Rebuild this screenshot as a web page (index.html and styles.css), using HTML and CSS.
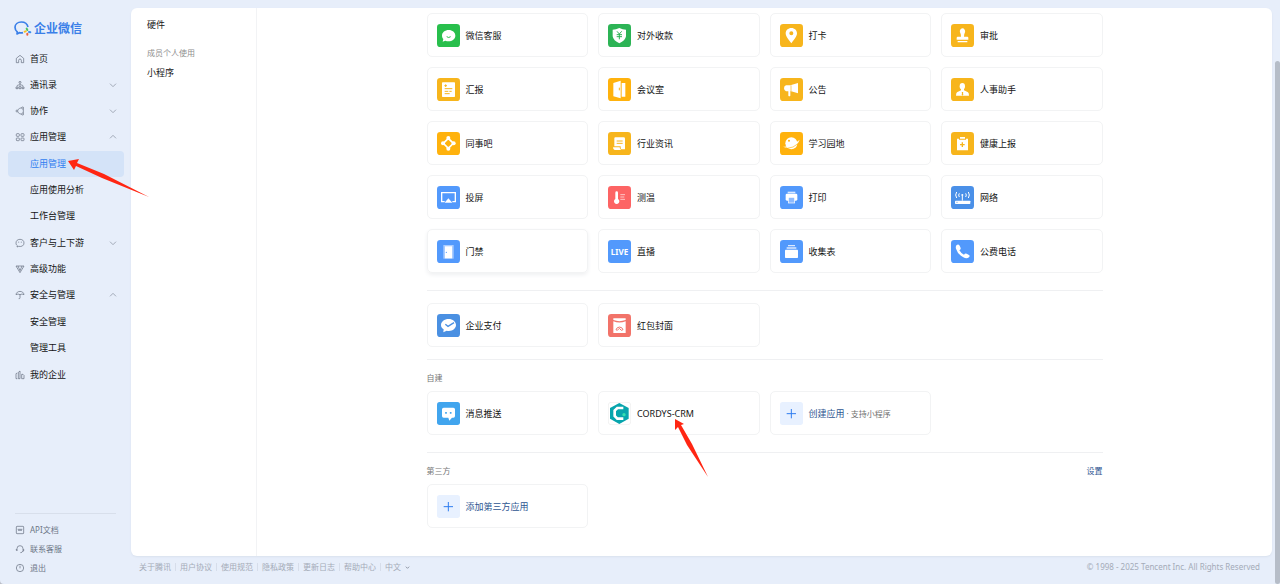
FILE: index.html
```html
<!DOCTYPE html>
<html lang="zh-CN">
<head>
<meta charset="utf-8">
<meta name="viewport" content="width=device-width, initial-scale=1">
<title>企业微信 - 应用管理</title>
<link rel="stylesheet" href="styles.css">
</head>
<body>
<div class="app">
  <aside class="sidebar">
    <a class="logo" href="#">
      <svg class="logo-mark" viewBox="0 0 54 45" fill="none">
        <path d="M42 18C40 9 32 3 22 3C11 3 3 10 3 19C3 25 6 30 10 33L9 39L16 35C20 36 23 36 27 35" stroke="#3a7fe8" stroke-width="5" stroke-linejoin="round"/>
        <path d="M38 23l2 4" stroke="#4fc265" stroke-width="6" stroke-linecap="round"/>
        <path d="M45 33l4 1" stroke="#3a8df0" stroke-width="6" stroke-linecap="round"/>
        <path d="M40 38l0 3" stroke="#f0603c" stroke-width="6" stroke-linecap="round"/>
        <path d="M32 32l3-1" stroke="#f9c21d" stroke-width="6" stroke-linecap="round"/>
      </svg>
      <span>企业微信</span>
    </a>
    <nav class="nav">
      <a class="nav-item" href="#"><svg class="ico" viewBox="0 0 30 30"><path d="M4 13L15 4L26 13V26H19V19A4 4 0 0 0 11 19V26H4Z"/></svg><span>首页</span></a>
      <button class="nav-item" type="button"><svg class="ico" viewBox="0 0 30 30"><circle cx="15" cy="7" r="3"/><path d="M15 10V15M6 19Q6 15 10 15H20Q24 15 24 19M3 26V21H9V26ZM12 26V20H18V26ZM21 26V21H27V26Z"/></svg><span>通讯录</span><svg class="chev" viewBox="0 0 24 24"><path d="M3 8l9 9 9-9"/></svg></button>
      <button class="nav-item" type="button"><svg class="ico" viewBox="0 0 30 30"><path d="M8 12Q13 6 20 5M8 18Q13 24 20 25M25 9V21"/><circle cx="6" cy="15" r="3"/><circle cx="23" cy="6" r="3"/><circle cx="23" cy="24" r="3"/></svg><span>协作</span><svg class="chev" viewBox="0 0 24 24"><path d="M3 8l9 9 9-9"/></svg></button>
      <button class="nav-item" type="button"><svg class="ico" viewBox="0 0 30 30"><rect x="4" y="5" width="9" height="8" rx="2"/><rect x="18" y="5" width="9" height="8" rx="2"/><rect x="4" y="18" width="9" height="8" rx="2"/><rect x="18" y="18" width="9" height="8" rx="2"/></svg><span>应用管理</span><svg class="chev" viewBox="0 0 24 24"><path d="M3 16l9-9 9 9"/></svg></button>
      <div class="subnav">
        <a class="nav-item sub active" href="#">应用管理</a>
        <a class="nav-item sub" href="#">应用使用分析</a>
        <a class="nav-item sub" href="#">工作台管理</a>
      </div>
      <button class="nav-item" type="button"><svg class="ico" viewBox="0 0 30 30"><path d="M15 4C8 4 3 8 3 15C3 18 4 21 7 23L6 27L11 25C20 27 27 23 27 15C27 8 22 4 15 4ZM11 11V14M19 11V14"/></svg><span>客户与上下游</span><svg class="chev" viewBox="0 0 24 24"><path d="M3 8l9 9 9-9"/></svg></button>
      <a class="nav-item" href="#"><svg class="ico" viewBox="0 0 30 30"><path d="M3 6H27L15 26ZM9 6L15 20L21 6"/></svg><span>高级功能</span></a>
      <button class="nav-item" type="button"><svg class="ico" viewBox="0 0 30 30"><path d="M3 14C4 1 26 1 27 14L21 12L15 14L9 12ZM15 14V23Q15 27 11 26"/></svg><span>安全与管理</span><svg class="chev" viewBox="0 0 24 24"><path d="M3 16l9-9 9 9"/></svg></button>
      <div class="subnav">
        <a class="nav-item sub" href="#">安全管理</a>
        <a class="nav-item sub" href="#">管理工具</a>
      </div>
      <a class="nav-item" href="#"><svg class="ico" viewBox="0 0 30 30"><path d="M7 26H3V11L7 9M10 26V7L15 3V26ZM20 26V13H24L27 16V26Z"/></svg><span>我的企业</span></a>
    </nav>
    <div class="side-foot">
      <a href="#"><svg class="ico" viewBox="0 0 30 30"><rect x="4" y="4" width="22" height="22" rx="2"/><path d="M8 13H22M9 16H21"/></svg><span>API文档</span></a>
      <a href="#"><svg class="ico" viewBox="0 0 30 30"><path d="M6 20V14A9 9 0 0 1 24 14V20M4 15V19H7M26 15V21H23M24 21Q22 26 16 26"/></svg><span>联系客服</span></a>
      <a href="#"><svg class="ico" viewBox="0 0 30 30"><circle cx="15" cy="15" r="11"/><path d="M15 8V16"/></svg><span>退出</span></a>
    </div>
  </aside>

  <div class="page">
    <div class="panel">
      <nav class="categories">
        <a href="#">硬件</a>
        <p>成员个人使用</p>
        <a href="#">小程序</a>
      </nav>
      <main class="content">
        <section class="cards">
          <a class="card" href="#"><svg class="tile" viewBox="0 0 69 69"><rect width="69" height="69" rx="10" fill="#28bf4c"/><path fill="#fff" d="M35 18C24 18 15 25 15 35C15 39 17 43 19 45L17 53L25 50C39 55 55 48 55 35C55 25 46 18 35 18Z"/><path d="M29 38Q35 43 41 38" fill="none" stroke="#28bf4c" stroke-width="3"/></svg><span>微信客服</span></a>
          <a class="card" href="#"><svg class="tile" viewBox="0 0 69 69"><rect width="69" height="69" rx="10" fill="#2cb455"/><path fill="#fff" d="M34 12Q44 17 54 17V37Q52 50 34 58Q16 50 14 37V17Q24 17 34 12Z"/><path d="M27 22L34 30L41 22M34 30V46M26 32H42M26 38H42" fill="none" stroke="#2cb455" stroke-width="3"/></svg><span>对外收款</span></a>
          <a class="card" href="#"><svg class="tile" viewBox="0 0 69 69"><rect width="69" height="69" rx="10" fill="#f7b51c"/><path fill="#fff" fill-rule="evenodd" d="M34 12C24 12 17 19 17 28C17 38 27 48 34 58C41 48 51 38 51 28C51 19 44 12 34 12ZM34 22A6 6 0 1 1 34 34A6 6 0 1 1 34 22Z"/></svg><span>打卡</span></a>
          <a class="card" href="#"><svg class="tile" viewBox="0 0 69 69"><rect width="69" height="69" rx="10" fill="#f7b51c"/><path fill="#fff" d="M34 13A9 9 0 0 1 42 25Q39 30 39 38H49Q52 38 52 42V47H17V42Q17 38 20 38H30Q30 30 27 25A9 9 0 0 1 34 13ZM20 51H49V55H20Z"/></svg><span>审批</span></a>
          <a class="card" href="#"><svg class="tile" viewBox="0 0 69 69"><rect width="69" height="69" rx="10" fill="#f7b51c"/><rect x="15" y="13" width="39" height="44" rx="2" fill="#fff"/><path d="M22 23H30M26 19V27M23 32H46M23 40H34M37 40H44M23 47H38" stroke="#f7b51c" stroke-width="3"/></svg><span>汇报</span></a>
          <a class="card" href="#"><svg class="tile" viewBox="0 0 69 69"><rect width="69" height="69" rx="10" fill="#ffb20d"/><path fill="#fff" d="M16 15L38 8V61L16 55ZM41 15H52V56H41Z"/><path d="M34 29V37" stroke="#ffb20d" stroke-width="3"/></svg><span>会议室</span></a>
          <a class="card" href="#"><svg class="tile" viewBox="0 0 69 69"><rect width="69" height="69" rx="10" fill="#f7b51c"/><path fill="#fff" d="M31 22L54 15V46L31 39V53Q28 56 25 53V40H18Q12 37 12 31Q12 24 18 22Z"/><path d="M33 22V39" stroke="#f7b51c" stroke-width="2"/></svg><span>公告</span></a>
          <a class="card" href="#"><svg class="tile" viewBox="0 0 69 69"><rect width="69" height="69" rx="10" fill="#f7b51c"/><ellipse cx="34" cy="25" rx="8" ry="10" fill="#fff"/><path fill="#fff" d="M30 31H39V37L51 43Q54 46 54 53H15Q15 46 18 43L30 37Z"/><path d="M32 42H37L36 45L37 50L34 53L32 50L33 45Z" fill="#f7b51c"/></svg><span>人事助手</span></a>
          <a class="card" href="#"><svg class="tile" viewBox="0 0 69 69"><rect width="69" height="69" rx="10" fill="#ffb20d"/><path d="M34 19L49 34L34 49L19 34Z" fill="none" stroke="#fff" stroke-width="5"/><g fill="#fff"><circle cx="34" cy="18" r="6"/><circle cx="50" cy="34" r="6"/><circle cx="34" cy="50" r="6"/><circle cx="18" cy="34" r="6"/></g></svg><span>同事吧</span></a>
          <a class="card" href="#"><svg class="tile" viewBox="0 0 69 69"><rect width="69" height="69" rx="10" fill="#f7b51c"/><path fill="#fff" d="M22 16H47Q51 16 51 20V52H41Q38 52 38 49V43H19V19Q19 16 22 16ZM15 46H35Q35 52 40 54H20Q15 52 15 46Z"/><path d="M26 27H44M26 34H44" stroke="#f7b51c" stroke-width="3"/></svg><span>行业资讯</span></a>
          <a class="card" href="#"><svg class="tile" viewBox="0 0 69 69"><rect width="69" height="69" rx="10" fill="#ffb20d"/><circle cx="34" cy="34" r="18" fill="#fff"/><path d="M9 44Q32 46 59 23Q56 34 46 40Q28 51 9 44Z" fill="#fff"/><path d="M22 49Q40 48 54 35" fill="none" stroke="#ffb20d" stroke-width="2"/><circle cx="27" cy="26" r="3" fill="#ffb20d"/></svg><span>学习园地</span></a>
          <a class="card" href="#"><svg class="tile" viewBox="0 0 69 69"><rect width="69" height="69" rx="10" fill="#f7b51c"/><path fill="#fff" d="M18 20H24V23H45V20H51V55H18ZM27 15H42V20H27Z"/><path d="M34 31V45M27 38H41" stroke="#f7b51c" stroke-width="4"/></svg><span>健康上报</span></a>
          <a class="card" href="#"><svg class="tile" viewBox="0 0 69 69"><rect width="69" height="69" rx="10" fill="#5299fc"/><path d="M23 47H14V20H55V47H46" fill="none" stroke="#fff" stroke-width="4"/><path d="M34 37L46 50H23Z" fill="#fff"/></svg><span>投屏</span></a>
          <a class="card" href="#"><svg class="tile" viewBox="0 0 69 69"><rect width="69" height="69" rx="10" fill="#fd6464"/><path fill="#fff" d="M22 20A4 4 0 0 1 30 20V39A8 8 0 1 1 22 39Z"/><path d="M37 26H51M37 33H49M37 40H51" stroke="#ffc5c5" stroke-width="3"/></svg><span>测温</span></a>
          <a class="card" href="#"><svg class="tile" viewBox="0 0 69 69"><rect width="69" height="69" rx="10" fill="#5299fc"/><rect x="23" y="17" width="23" height="5" fill="#dbe9ff"/><rect x="17" y="23" width="35" height="21" rx="4" fill="#fff"/><rect x="25" y="34" width="19" height="17" fill="#8dbbff" stroke="#fff" stroke-width="2"/></svg><span>打印</span></a>
          <a class="card" href="#"><svg class="tile" viewBox="0 0 69 69"><rect width="69" height="69" rx="10" fill="#4a90e8"/><rect x="12" y="44" width="46" height="10" rx="2" fill="#fff"/><path d="M16 49H20" stroke="#4a90e8" stroke-width="2"/><path d="M34 30V44M17 18Q11 27 17 36M25 22Q21 27 25 33M44 22Q48 27 44 33M52 18Q58 27 52 36" fill="none" stroke="#fff" stroke-width="3"/><circle cx="34" cy="27" r="3" fill="#fff"/></svg><span>网络</span></a>
          <a class="card raised" href="#"><svg class="tile" viewBox="0 0 69 69"><rect width="69" height="69" rx="10" fill="#5299fc"/><rect x="19" y="15" width="31" height="41" fill="#a9ccff"/><rect x="24" y="19" width="21" height="36" fill="#fff"/><circle cx="28" cy="37" r="2" fill="#5299fc"/></svg><span>门禁</span></a>
          <a class="card" href="#"><b class="tile live">LIVE</b><span>直播</span></a>
          <a class="card" href="#"><svg class="tile" viewBox="0 0 69 69"><rect width="69" height="69" rx="10" fill="#5299fc"/><path d="M24 17H45M20 24H49" stroke="#dbe9ff" stroke-width="4"/><rect x="15" y="29" width="39" height="25" rx="2" fill="#fff"/></svg><span>收集表</span></a>
          <a class="card" href="#"><svg class="tile" viewBox="0 0 69 69"><rect width="69" height="69" rx="10" fill="#5299fc"/><path fill="#fff" d="M17 15Q22 11 26 17L29 24Q30 28 25 31Q30 40 39 44Q42 39 47 41L54 45Q58 48 54 52Q47 58 37 52Q20 43 15 26Q13 19 17 15Z"/></svg><span>公费电话</span></a>
        </section>

        <section class="group">
          <div class="cards">
            <a class="card" href="#"><svg class="tile" viewBox="0 0 69 69"><rect width="69" height="69" rx="10" fill="#4a90e2"/><path fill="#fff" d="M35 15C22 15 12 23 12 33C12 39 15 43 20 46L19 55L29 50C44 54 57 44 57 33C57 23 47 15 35 15Z"/><path d="M25 31L33 37L51 26" fill="none" stroke="#4a90e2" stroke-width="4"/></svg><span>企业支付</span></a>
            <a class="card" href="#"><svg class="tile" viewBox="0 0 69 69"><rect width="69" height="69" rx="10" fill="#f27369"/><path fill="#fff" d="M16 13H53V18Q34 25 16 18ZM16 22Q34 29 53 22V57H16Z"/><path d="M24 47A11 11 0 0 1 45 47L40 49L34 43L28 49Z" fill="none" stroke="#f27369" stroke-width="3"/></svg><span>红包封面</span></a>
          </div>
        </section>

        <section class="group ruled">
          <header><h2>自建</h2></header>
          <div class="cards">
            <a class="card" href="#"><svg class="tile" viewBox="0 0 69 69"><rect width="69" height="69" rx="8" fill="#41a5ee"/><path fill="#fff" d="M20 17H49Q54 17 54 22V42Q54 47 49 47H45L37 56L34 47H20Q15 47 15 42V22Q15 17 20 17Z"/><path d="M27 30V35M41 30V35" stroke="#41a5ee" stroke-width="5"/></svg><span>消息推送</span></a>
            <a class="card" href="#"><svg class="tile" viewBox="0 0 69 69"><rect x="1" y="1" width="67" height="67" rx="8" fill="#fff" stroke="#ececec" stroke-width="2"/><path d="M34 3L62 18V50L34 66L6 50V18Z" fill="#07a5ad"/><path d="M46 18H28L20 26V42L28 50H46" fill="none" stroke="#fff" stroke-width="8"/><circle cx="48" cy="38" r="5" fill="#34e0b1"/></svg><span>CORDYS-CRM</span></a>
            <a class="card add" href="#"><svg class="tile" viewBox="0 0 69 69"><rect width="69" height="69" rx="8" fill="#e8f1ff"/><path d="M34 21V49M20 35H48" stroke="#2f7df0" stroke-width="3"/></svg><span>创建应用<small> · 支持小程序</small></span></a>
          </div>
        </section>

        <section class="group">
          <header><h2>第三方</h2><a href="#">设置</a></header>
          <div class="cards">
            <a class="card add" href="#"><svg class="tile" viewBox="0 0 69 69"><rect width="69" height="69" rx="8" fill="#e8f1ff"/><path d="M34 21V49M20 35H48" stroke="#2f7df0" stroke-width="3"/></svg><span>添加第三方应用</span></a>
          </div>
        </section>
      </main>
    </div>
    <footer class="footer">
      <div class="links">
        <a href="#">关于腾讯</a><a href="#">用户协议</a><a href="#">使用规范</a><a href="#">隐私政策</a><a href="#">更新日志</a><a href="#">帮助中心</a>
        <button type="button">中文 <svg viewBox="0 0 12 12"><path d="M2 4l4 4 4-4"/></svg></button>
      </div>
      <span>© 1998 - 2025 Tencent Inc. All Rights Reserved</span>
    </footer>
  </div>

  <div class="scroll-thumb"></div>
  <svg class="arrow arrow-nav" viewBox="0 0 82 39"><path fill="#ff2613" d="M0 2L11 0L9 4L36 15L81 38L34 19L8 7L6 11Z"/></svg>
  <svg class="arrow arrow-app" viewBox="0 0 34 59"><path fill="#ff2613" d="M0 0L9 5L6 6L17 25L33 58L12 26L3 8L0 11Z"/></svg>
</div>
</body>
</html>
```

FILE: styles.css
```css
* { box-sizing: border-box; }

body {
  margin: 0;
  background: #b9bdc6;
  color: #141414;
  font: 9px/12px "Noto Sans", "Noto Sans CJK SC", sans-serif;
}

a { color: inherit; text-decoration: none; }

button {
  border: 0;
  padding: 0;
  background: none;
  color: inherit;
  font: inherit;
  cursor: pointer;
}

.app {
  position: relative;
  display: grid;
  grid-template-columns: 131px minmax(0, 1fr);
  min-height: 100vh;
  background: #e7eefa;
  border-bottom-left-radius: 4px;
}

/* Sidebar */
.sidebar {
  display: flex;
  flex-direction: column;
  padding: 18px 7px 7px 8px;
}

.logo {
  display: flex;
  align-items: center;
  gap: 2px;
  padding-left: 6px;
  height: 20px;
  color: #3a7fe8;
  font-size: 12px;
  font-weight: 700;
}

.logo span { padding-top: 2px; }
.logo-mark { width: 18px; height: 15px; }

.nav {
  display: flex;
  flex-direction: column;
  margin-top: 8px;
}

.nav-item {
  display: flex;
  align-items: center;
  gap: 5px;
  width: 100%;
  height: 26px;
  padding: 0 7px;
  border-radius: 4px;
  text-align: left;
}

.subnav { margin: 1px 0; }
.sub { padding-left: 22px; }
.active { background: #d4e3f8; color: #2f7df0; }

.ico {
  width: 10px;
  height: 10px;
  fill: none;
  stroke: #5f6878;
  stroke-width: 2;
}

.chev {
  width: 8px;
  height: 8px;
  margin-left: auto;
  fill: none;
  stroke: #7f8795;
  stroke-width: 2;
}

.side-foot {
  display: flex;
  flex-direction: column;
  margin: auto 8px 0 7px;
  padding-top: 6px;
  border-top: 1px solid #d8dfeb;
  color: #6d7686;
  font-size: 8px;
}

.side-foot a {
  display: flex;
  align-items: center;
  gap: 5px;
  height: 19px;
}

/* Main panel */
.page {
  display: flex;
  flex-direction: column;
  padding: 8px 8px 0 0;
}

.panel {
  display: flex;
  flex: 1;
  background: #fff;
  border-radius: 6px;
  box-shadow: 0 1px 2px #d9e1ee;
}

.categories {
  display: flex;
  flex: 0 0 126px;
  flex-direction: column;
  padding: 11px 16px;
  border-right: 1px solid #f2f3f5;
}

.categories p {
  margin: 16px 0 8px;
  color: #8d8d8d;
  font-size: 8px;
}

.content {
  flex: 0 1 676px;
  margin: 0 auto;
  padding: 5px 0 28px;
}

.cards {
  display: grid;
  grid-template-columns: repeat(4, minmax(0, 1fr));
  gap: 10px;
}

.card {
  display: flex;
  align-items: center;
  gap: 6px;
  height: 44px;
  padding: 0 9px;
  border: 1px solid #f2f3f4;
  border-radius: 5px;
}

.card span { padding-top: 2px; }
.raised { box-shadow: 0 2px 4px #eff0f2; }
.add { color: #2d5591; }
.card small { color: #717171; font-size: 8px; }

.tile {
  flex: none;
  width: 23px;
  height: 23px;
}

.live {
  border-radius: 3px;
  background: #5299fc;
  color: #fff;
  font-size: 8px;
  line-height: 23px;
  text-align: center;
}

.group {
  margin-top: 17px;
  padding-top: 12px;
  border-top: 1px solid #eff0f2;
}

.ruled { margin-top: 12px; }

.group header {
  display: flex;
  justify-content: space-between;
  margin-bottom: 7px;
  color: #2d5591;
  font-size: 8px;
}

.group h2 {
  margin: 0;
  color: #777;
  font-size: 8px;
  font-weight: 400;
}

/* Footer */
.footer {
  display: flex;
  align-items: center;
  justify-content: space-between;
  height: 28px;
  padding: 0 12px 6px 8px;
  color: #a4abb8;
  font-size: 8px;
}

.links { display: flex; }

.links a {
  margin: 2px 4px 2px 0;
  padding-right: 4px;
  border-right: 1px solid #d6ddea;
  line-height: 8px;
}

.links svg {
  width: 5px;
  height: 5px;
  margin-left: 2px;
  fill: none;
  stroke: #7f8795;
  stroke-width: 2;
}

/* Overlays */
.scroll-thumb {
  position: absolute;
  top: 61px;
  right: 0;
  bottom: 0;
  width: 5px;
  border-radius: 3px;
  background: #b6bdc8;
}

.arrow { position: absolute; pointer-events: none; }
.arrow-nav { top: 159px; left: 68px; width: 82px; height: 39px; }
.arrow-app { top: 419px; left: 675px; width: 34px; height: 59px; }
```
